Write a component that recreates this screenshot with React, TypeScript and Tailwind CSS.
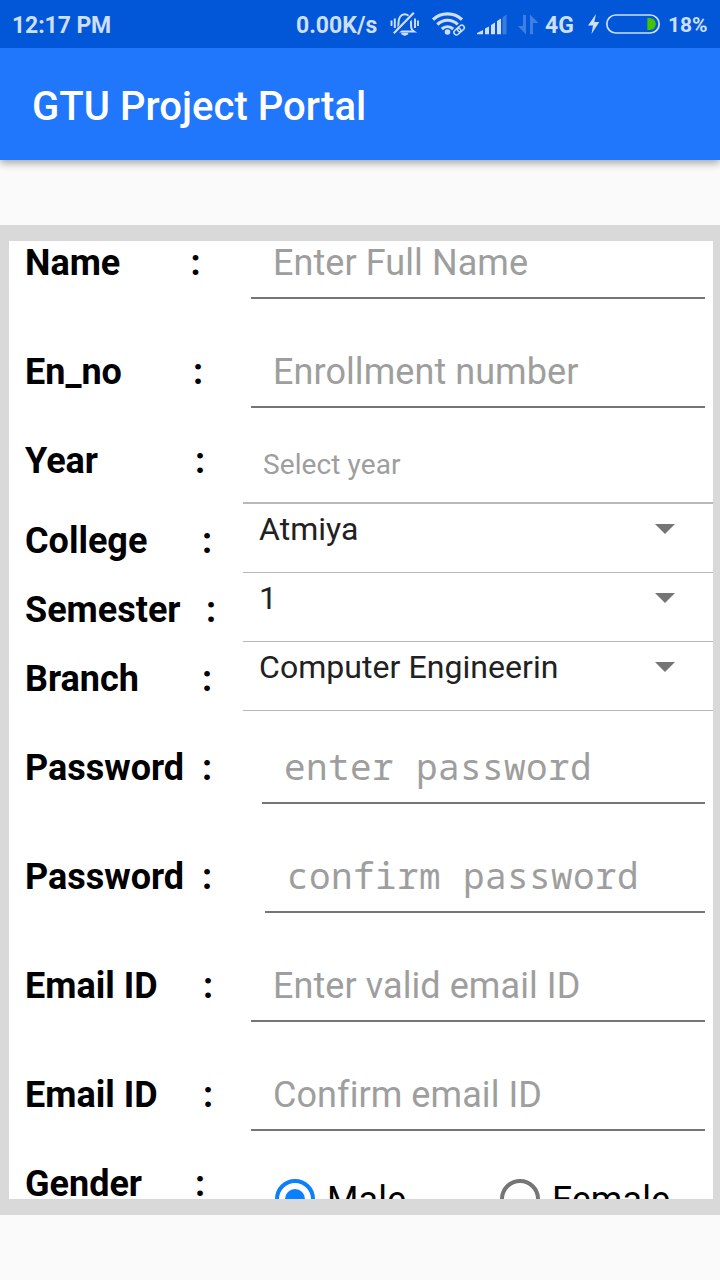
import type { ReactNode } from "react";

const ink = "#cddffa";

function StatusBar() {
  return (
    <div className="relative z-10 flex h-12 shrink-0 items-center bg-[#0257d9] font-bold text-[#cddffa]">
      <span className="ml-3 w-[283px] pt-[3px] whitespace-nowrap text-[23px] leading-none tracking-[-0.1px]">12:17 PM</span>
      <span className="ml-px w-[92px] pt-[3px] whitespace-nowrap text-[23px] leading-none">0.00K/s</span>
      <svg className="h-12 w-10 shrink-0" viewBox="388 0 40 48" fill="none" stroke={ink} strokeWidth="2">
        <path d="M396 31.500c2.500-2 2.500-4 2.500-8.500 0-5 2.200-8.800 6.200-8.800s6.300 3.800 6.300 8.800c0 4.500 0 6.500 3 8.500Z" />
        <path d="M401.500 33.500h6.500l-3.200 1.600Z" fill={ink} strokeWidth="1.500" />
        <path d="M392.500 36 415.500 12" stroke="#0257d9" strokeWidth="5" />
        <path d="M393.800 33.300 413.800 12.700" strokeWidth="2.200" />
        <path d="M391.500 20.500v5.500M394.800 18.500v9.500M415 18.500v9.500M418 20.500v5.500" strokeWidth="1.900" />
      </svg>
      <svg className="h-12 w-11 shrink-0" viewBox="428 0 44 48" fill="none" stroke={ink} strokeWidth="3.100">
        <path d="M433 19.700c8-7.800 21-7.800 29 0" />
        <path d="M437.300 24.500c6-5.600 14.500-5.600 20.400 0" />
        <path d="M441.800 29c3.400-3 8-3 11.400 0" />
        <circle cx="447.500" cy="32" r="2.800" fill={ink} stroke="none" />
        <g transform="rotate(-42 459 30)" strokeWidth="1.500">
          <rect x="453" y="27.600" width="7.500" height="5" rx="2.500" />
          <rect x="457.700" y="27.600" width="7.500" height="5" rx="2.500" />
        </g>
      </svg>
      <svg className="h-12 w-[72px] shrink-0" viewBox="472 0 72 48" fill={ink}>
        <path d="M477 34.300v-1.300l6-3v4.300ZM485 28.500l4-2v7.800h-4ZM491 25l4-2.500v11.800h-4ZM497 21l4-2.500v15.800h-4Z" />
        <path d="M502.500 17.500l4-3v19.800h-4Z" opacity="0.280" />
        <path d="M523 15h3v19.500l-8-8.500h5ZM530 14.500l8.500 8.500h-5.500v11.300H530Z" opacity="0.300" />
      </svg>
      <span className="ml-px w-[41px] pt-[3px] whitespace-nowrap text-[23px] leading-none">4G</span>
      <svg className="h-12 w-[80px] shrink-0" viewBox="586 0 80 48" fill="none">
        <path d="M596 14 588 25.500h5L591.500 34l7.800-12h-5Z" fill={ink} />
        <rect x="606.800" y="15" width="52.400" height="18" rx="9" stroke={ink} strokeWidth="1.700" />
        <path d="M647.300 18h2.500a6 6 0 0 1 0 12h-2.500Z" fill="#45c400" />
      </svg>
      <span className="ml-[2px] pt-[2px] whitespace-nowrap text-[21px] leading-none">18%</span>
    </div>
  );
}

function Row({ name, height, nameWidth, lift, children }: {
  name: string;
  height: string;
  nameWidth: string;
  lift: string;
  children: ReactNode;
}) {
  return (
    <div className={`flex shrink-0 items-end pl-4 ${height}`}>
      <div className={`flex w-[218px] shrink-0 text-[36px] leading-[42px] font-bold text-black ${lift}`}>
        <span className={`shrink-0 ${nameWidth}`}>{name}</span>
        <span>:</span>
      </div>
      {children}
    </div>
  );
}

function Field({ hint, inset = "ml-2", type = "pb-[13px] tracking-[0.07px]" }: { hint: string; inset?: string; type?: string }) {
  return (
    <div className={`mr-2 flex-1 border-b-2 border-[#757575] pl-[22px] text-[36px] leading-[42px] whitespace-nowrap text-[#9e9e9e] ${inset} ${type}`}>
      {hint}
    </div>
  );
}

function Select({ value }: { value: string }) {
  return (
    <div className="flex flex-1 items-center border-b border-[#b8b8b8] pr-[38px] pb-[24px] pl-4 text-[32px] leading-[38px] text-[#212121]">
      <span className="flex-1 whitespace-nowrap tracking-[0.05px]">{value}</span>
      <svg className="h-[10px] w-5" viewBox="0 0 20 10" fill="#757575">
        <path d="M0 0h20L10 10Z" />
      </svg>
    </div>
  );
}

function Radio({ label, checked = false, className }: { label: string; checked?: boolean; className: string }) {
  const color = checked ? "#0a80ff" : "#757575";
  return (
    <div className={`flex items-start ${className}`}>
      <svg className="h-10 w-10 shrink-0" viewBox="0 0 40 40" fill="none">
        <circle cx="20" cy="20" r="18" stroke={color} strokeWidth="4" />
        {checked && <circle cx="20" cy="20" r="10" fill={color} />}
      </svg>
      <span className="ml-3 text-[36px] leading-[42px] tracking-[0.1px] text-black">{label}</span>
    </div>
  );
}

const mono = "font-['Droid_Sans_Mono','Noto_Sans_Mono','DejaVu_Sans_Mono',monospace] pb-[14px] tracking-[0.4px]";

export default function App() {
  return (
    <div className="flex h-[1280px] w-[720px] flex-col overflow-hidden bg-[#fafafa] font-['Roboto',sans-serif]">
      <StatusBar />
      <header className="flex h-28 shrink-0 items-center bg-[#2177fc] pt-[6px] pl-8 text-[40px] font-medium tracking-[0.05px] text-white shadow-[0_3px_8px_rgba(0,0,0,0.35)]">
        GTU Project Portal
      </header>
      <main className="mt-[65px] h-[990px] shrink-0 bg-[#d9d9d9] py-4 pr-[7px] pl-[9px]">
        <div className="flex h-full flex-col overflow-hidden bg-white">
          <Row name="Name" height="h-[58px]" nameWidth="w-[165.500px]" lift="pb-[15px]">
            <Field hint="Enter Full Name" />
          </Row>
          <Row name="En_no" height="h-[109px]" nameWidth="w-[168px]" lift="pb-[15px]">
            <Field hint="Enrollment number" />
          </Row>
          <Row name="Year" height="h-[96px]" nameWidth="w-[170px]" lift="pb-[22px]">
            <div className="flex-1 border-b-2 border-[#b8b8b8] pb-[21px] pl-5 text-[28px] leading-[33px] tracking-[0.1px] text-[#9e9e9e]">
              Select year
            </div>
          </Row>
          <Row name="College" height="h-[69px]" nameWidth="w-[177px]" lift="pb-[11px]">
            <Select value="Atmiya" />
          </Row>
          <Row name="Semester" height="h-[69px]" nameWidth="w-[181px]" lift="pb-[11px]">
            <Select value="1" />
          </Row>
          <Row name="Branch" height="h-[69px]" nameWidth="w-[177px]" lift="pb-[11px]">
            <Select value="Computer Engineerin" />
          </Row>
          <Row name="Password" height="h-[93px]" nameWidth="w-[177px]" lift="pb-[15px]">
            <Field hint="enter password" inset="ml-[19px]" type={mono} />
          </Row>
          <Row name="Password" height="h-[109px]" nameWidth="w-[177px]" lift="pb-[15px]">
            <Field hint="confirm password" inset="ml-[22px]" type={mono} />
          </Row>
          <Row name="Email ID" height="h-[109px]" nameWidth="w-[178px]" lift="pb-[15px]">
            <Field hint="Enter valid email ID" />
          </Row>
          <Row name="Email ID" height="h-[109px]" nameWidth="w-[178px]" lift="pb-[15px]">
            <Field hint="Confirm email ID" />
          </Row>
          <Row name="Gender" height="h-[96px]" nameWidth="w-[170px]" lift="pb-[22px]">
            <div className="flex flex-1 self-stretch pt-12 pl-8">
              <Radio label="Male" checked className="w-[225px]" />
              <Radio label="Female" className="" />
            </div>
          </Row>
        </div>
      </main>
    </div>
  );
}
